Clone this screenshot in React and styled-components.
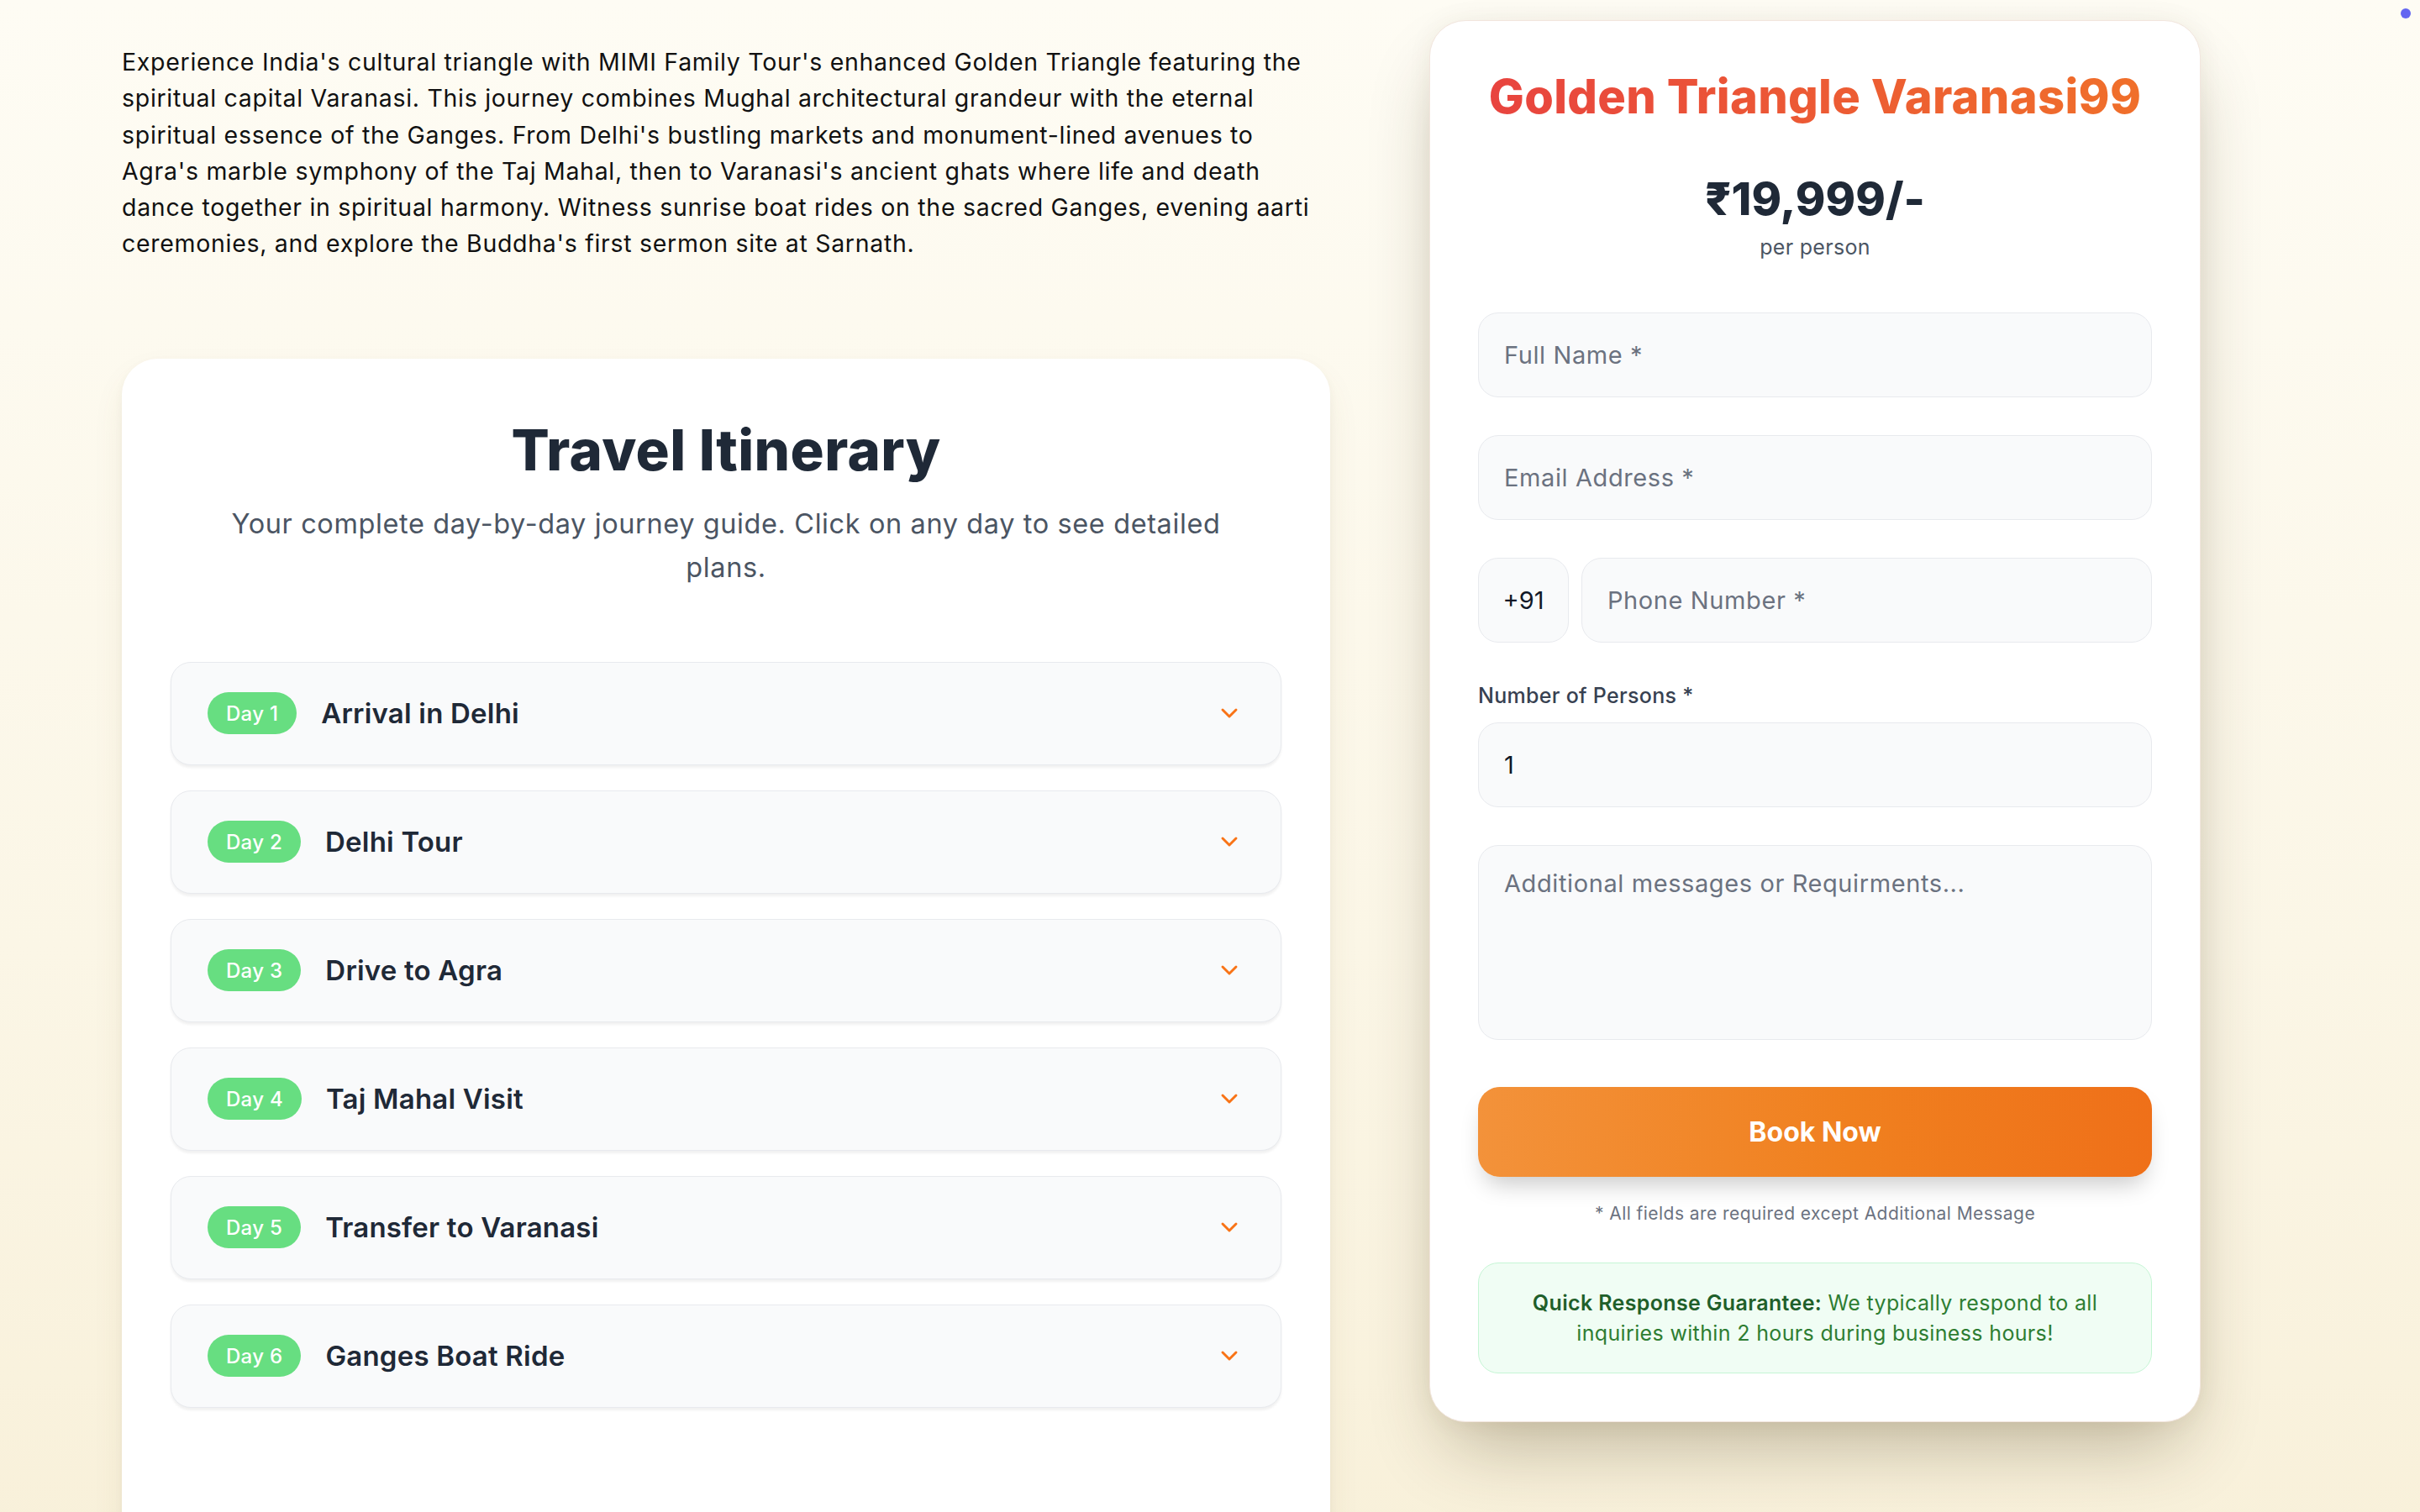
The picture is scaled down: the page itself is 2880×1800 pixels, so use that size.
import React from 'react';
import styled, { createGlobalStyle } from 'styled-components';
import { ChevronDown } from 'lucide-react';

const GlobalStyle = createGlobalStyle`
  * {
    box-sizing: border-box;
  }

  body {
    margin: 0;
    min-height: 100vh;
    font-family: Inter, "Noto Sans", sans-serif;
    background: linear-gradient(180deg, #fefcf4 0%, #fbf6e6 60%, #f8f0d9 100%);
    color: #1f2937;
  }
`;

const Page = styled.div`
  min-height: 100vh;
`;

const Layout = styled.div`
  display: flex;
  align-items: flex-start;
  gap: 118px;
  padding: 24px 0 0 145px;
`;

const Main = styled.main`
  width: 1438px;
  flex-shrink: 0;
`;

const Intro = styled.p`
  margin: 28px 0 115px;
  font-size: 28.5px;
  line-height: 43.3px;
  letter-spacing: 0.7px;
  white-space: nowrap;
  color: #111111;
`;

const ItineraryCard = styled.section`
  background: #ffffff;
  border-radius: 43px;
  padding: 58px 58px 200px;
  box-shadow: 0 18px 45px -10px rgba(120, 100, 40, 0.12), 0 4px 12px rgba(0, 0, 0, 0.04);
  display: flex;
  flex-direction: column;
  align-items: center;
`;

const CardTitle = styled.h2`
  margin: 16px 0 27px;
  font-size: 67px;
  line-height: 70px;
  font-weight: 800;
  letter-spacing: 0.4px;
  color: #1f2937;
  text-align: center;
`;

const CardSubtitle = styled.p`
  margin: 0 0 86px;
  max-width: 1215px;
  font-size: 32.5px;
  line-height: 52px;
  letter-spacing: 0.6px;
  color: #4b5563;
  text-align: center;
`;

const DayList = styled.div`
  width: 100%;
  display: flex;
  flex-direction: column;
  gap: 30px;
`;

const DayRow = styled.div`
  height: 123px;
  display: flex;
  align-items: center;
  gap: 29px;
  padding: 0 43px;
  background: #f9fafb;
  border: 1.5px solid #e8eaee;
  border-radius: 24px;
  box-shadow: 0 3px 3px rgba(0, 0, 0, 0.06);
`;

const DayBadge = styled.span`
  display: inline-flex;
  align-items: center;
  height: 50px;
  padding: 0 22px;
  border-radius: 25px;
  background: #67de81;
  color: #ffffff;
  font-size: 24px;
  font-weight: 500;
  letter-spacing: 0.3px;
  white-space: nowrap;
`;

const DayTitle = styled.h3`
  margin: 0;
  font-size: 33px;
  font-weight: 600;
  letter-spacing: 0.2px;
  color: #1f2937;
`;

const Chevron = styled(ChevronDown)`
  flex-shrink: 0;
  margin-left: auto;
  margin-right: 2px;
  color: #f97316;
`;

const Aside = styled.aside`
  width: 918px;
  flex-shrink: 0;
`;

const BookingCard = styled.div`
  background: #ffffff;
  border: 1px solid #f2e6de;
  border-radius: 43px;
  padding: 57px;
  box-shadow: 0 45px 90px -22px rgba(60, 45, 10, 0.32), 0 0 30px rgba(90, 70, 20, 0.06);
  text-align: center;
`;

const TourTitle = styled.h1`
  margin: 0;
  font-size: 56px;
  line-height: 66px;
  font-weight: 800;
  letter-spacing: 0.3px;
  background: linear-gradient(90deg, #e8433f 0%, #ec5a34 50%, #f0702a 100%);
  -webkit-background-clip: text;
  background-clip: text;
  color: transparent;
`;

const Price = styled.div`
  margin-top: 56px;
  font-size: 54px;
  line-height: 66px;
  font-weight: 800;
  color: #1f2937;
`;

const PerPerson = styled.div`
  margin-top: 6px;
  font-size: 25px;
  line-height: 36px;
  letter-spacing: 0.3px;
  color: #4b5563;
`;

const Form = styled.form`
  margin-top: 60px;
  display: flex;
  flex-direction: column;
  gap: 45px;
  text-align: left;
`;

const fieldBase = `
  width: 100%;
  background: #f9fafb;
  border: 1.5px solid #e8eaee;
  border-radius: 24px;
  font-family: Inter, "Noto Sans", sans-serif;
  font-size: 29px;
  letter-spacing: 0.6px;
  color: #111827;
  outline: none;
  &::placeholder {
    color: #6b7280;
  }
`;

const Input = styled.input`
  ${fieldBase}
  height: 101px;
  padding: 0 30px;
`;

const TextArea = styled.textarea`
  ${fieldBase}
  height: 232px;
  padding: 24px 30px;
  line-height: 42px;
  resize: none;
`;

const PhoneRow = styled.div`
  display: flex;
  gap: 15px;
`;

const CountryCode = styled.div`
  width: 108px;
  height: 101px;
  flex-shrink: 0;
  display: flex;
  align-items: center;
  justify-content: center;
  background: #f9fafb;
  border: 1.5px solid #e8eaee;
  border-radius: 24px;
  font-size: 29px;
  color: #111827;
`;

const FieldGroup = styled.div`
  display: flex;
  flex-direction: column;
  gap: 14px;
`;

const Label = styled.label`
  font-size: 25px;
  line-height: 36px;
  font-weight: 500;
  letter-spacing: 0.3px;
  color: #374151;
`;

const BookButton = styled.button`
  margin-top: 11px;
  height: 107px;
  border: none;
  border-radius: 26px;
  background: linear-gradient(90deg, #f3923a 0%, #f0801f 55%, #ef7019 100%);
  color: #ffffff;
  font-family: Inter, "Noto Sans", sans-serif;
  font-size: 32px;
  font-weight: 700;
  box-shadow: 0 16px 28px -8px rgba(0, 0, 0, 0.22);
  cursor: pointer;
`;

const Note = styled.p`
  margin: 28px 0 42px;
  font-size: 21px;
  line-height: 32px;
  letter-spacing: 0.45px;
  color: #6b7280;
`;

const Guarantee = styled.div`
  padding: 29px 28px;
  background: #f0fdf4;
  border: 1.5px solid #c6f6d5;
  border-radius: 24px;
  font-size: 25px;
  line-height: 36px;
  letter-spacing: 0.35px;
  text-align: center;
  color: #2e7d32;
`;

const GuaranteeLine = styled.p`
  margin: 0;
`;

const GuaranteeStrong = styled.strong`
  font-weight: 600;
  color: #1f5f2a;
`;

const StatusDot = styled.span`
  position: fixed;
  top: 10px;
  right: 11px;
  width: 12px;
  height: 12px;
  border-radius: 50%;
  background: #6366f1;
`;

const introLines = [
  "Experience India's cultural triangle with MIMI Family Tour's enhanced Golden Triangle featuring the",
  'spiritual capital Varanasi. This journey combines Mughal architectural grandeur with the eternal',
  "spiritual essence of the Ganges. From Delhi's bustling markets and monument-lined avenues to",
  "Agra's marble symphony of the Taj Mahal, then to Varanasi's ancient ghats where life and death",
  'dance together in spiritual harmony. Witness sunrise boat rides on the sacred Ganges, evening aarti',
  "ceremonies, and explore the Buddha's first sermon site at Sarnath.",
];

const days = [
  'Arrival in Delhi',
  'Delhi Tour',
  'Drive to Agra',
  'Taj Mahal Visit',
  'Transfer to Varanasi',
  'Ganges Boat Ride',
];

const App = () => {
  return (
    <Page>
      <GlobalStyle />
      <Layout>
        <Main>
          <Intro>
            {introLines.map((line, i) => (
              <React.Fragment key={i}>
                {line}
                {i < introLines.length - 1 && <br />}
              </React.Fragment>
            ))}
          </Intro>

          <ItineraryCard>
            <CardTitle>Travel Itinerary</CardTitle>
            <CardSubtitle>
              Your complete day-by-day journey guide. Click on any day to see detailed plans.
            </CardSubtitle>
            <DayList>
              {days.map((title, i) => (
                <DayRow key={title}>
                  <DayBadge>Day {i + 1}</DayBadge>
                  <DayTitle>{title}</DayTitle>
                  <Chevron size={32} strokeWidth={2.2} />
                </DayRow>
              ))}
            </DayList>
          </ItineraryCard>
        </Main>

        <Aside>
          <BookingCard>
            <TourTitle>Golden Triangle Varanasi99</TourTitle>
            <Price>₹19,999/-</Price>
            <PerPerson>per person</PerPerson>

            <Form onSubmit={(e) => e.preventDefault()}>
              <Input type="text" placeholder="Full Name *" />
              <Input type="email" placeholder="Email Address *" />
              <PhoneRow>
                <CountryCode>+91</CountryCode>
                <Input type="tel" placeholder="Phone Number *" />
              </PhoneRow>
              <FieldGroup>
                <Label htmlFor="persons">Number of Persons *</Label>
                <Input id="persons" type="text" defaultValue="1" />
              </FieldGroup>
              <TextArea placeholder="Additional messages or Requirments..." />
              <BookButton type="submit">Book Now</BookButton>
            </Form>

            <Note>* All fields are required except Additional Message</Note>

            <Guarantee>
              <GuaranteeLine>
                <GuaranteeStrong>Quick Response Guarantee:</GuaranteeStrong> We typically respond to all
              </GuaranteeLine>
              <GuaranteeLine>inquiries within 2 hours during business hours!</GuaranteeLine>
            </Guarantee>
          </BookingCard>
        </Aside>
      </Layout>
      <StatusDot />
    </Page>
  );
};

export default App;
